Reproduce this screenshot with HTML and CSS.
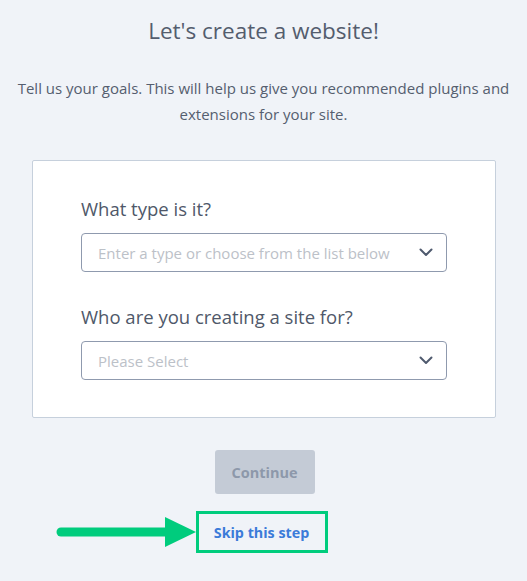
FILE: index.html
```html
<!DOCTYPE html>
<html lang="en">
<head>
<meta charset="utf-8">
<title>Let's create a website!</title>
<link rel="stylesheet" href="styles.css">
</head>
<body>
<main class="page">
  <h1 class="title">Let's create a website!</h1>
  <p class="intro">Tell us your goals. This will help us give you recommended plugins and extensions for your site.</p>
  <section class="card">
    <div class="field">
      <label class="label">What type is it?</label>
      <div class="select">
        <span class="placeholder">Enter a type or choose from the list below</span>
        <svg class="chevron" width="14" height="9" viewBox="0 0 14 9"><path d="M1.5 1.5 L7 7 L12.5 1.5" fill="none" stroke="#4f5a6e" stroke-width="2" stroke-linecap="round" stroke-linejoin="round"/></svg>
      </div>
    </div>
    <div class="field">
      <label class="label">Who are you creating a site for?</label>
      <div class="select">
        <span class="placeholder">Please Select</span>
        <svg class="chevron" width="14" height="9" viewBox="0 0 14 9"><path d="M1.5 1.5 L7 7 L12.5 1.5" fill="none" stroke="#4f5a6e" stroke-width="2" stroke-linecap="round" stroke-linejoin="round"/></svg>
      </div>
    </div>
  </section>
  <div class="actions">
    <button class="continue" disabled>Continue</button>
    <div class="skip-wrap">
      <svg class="arrow" width="140" height="32" viewBox="0 0 140 32"><line x1="5" y1="16" x2="112" y2="16" stroke="#00cc7d" stroke-width="9" stroke-linecap="round"/><polygon points="109,1 140,16 109,31" fill="#00cc7d"/></svg>
      <a class="skip" href="#">Skip this step</a>
    </div>
  </div>
</main>
</body>
</html>
```

FILE: styles.css
```css
html, body {
  margin: 0;
  padding: 0;
  background: #f0f3f8;
}
body {
  font-family: "Open Sans", "Liberation Sans", sans-serif;
  color: #545d6f;
}
.page {
  width: 527px;
  display: flex;
  flex-direction: column;
  align-items: center;
}
.title {
  margin: 16px 0 0;
  font-size: 22.5px;
  line-height: 30px;
  font-weight: 400;
  color: #545d6e;
  text-align: center;
}
.intro {
  margin: 29px 0 0;
  width: 520px;
  font-size: 15px;
  line-height: 26px;
  text-align: center;
  color: #555e6f;
}
.card {
  box-sizing: border-box;
  margin-top: 33px;
  margin-left: 1px;
  width: 464px;
  padding: 36px 48px 37px;
  background: #ffffff;
  border: 1px solid #c6d0dc;
  border-radius: 2px;
  display: flex;
  flex-direction: column;
  gap: 33px;
}
.field {
  display: flex;
  flex-direction: column;
  gap: 12px;
}
.label {
  font-size: 18.5px;
  line-height: 24px;
  color: #4f5869;
}
.select {
  box-sizing: border-box;
  height: 39px;
  border: 1px solid #8f9aae;
  border-radius: 4px;
  padding: 0 13px 0 16px;
  display: flex;
  align-items: center;
  justify-content: space-between;
}
.placeholder {
  font-size: 15px;
  color: #bcc1c8;
}
.chevron {
  display: block;
}
.actions {
  display: flex;
  flex-direction: column;
  align-items: center;
  margin-top: 32px;
}
.continue {
  width: 100px;
  height: 44px;
  border: none;
  border-radius: 3px;
  background: #c4cbd6;
  color: #8d98aa;
  font-family: inherit;
  font-size: 14.5px;
  font-weight: 700;
  margin-left: 2px;
}
.skip-wrap {
  position: relative;
  margin-top: 17px;
  margin-right: 4px;
}
.skip {
  box-sizing: border-box;
  display: flex;
  align-items: center;
  justify-content: center;
  width: 132px;
  height: 42px;
  border: 3px solid #00cc7d;
  color: #3b7bd9;
  font-size: 14.3px;
  font-weight: 700;
  text-decoration: none;
}
.arrow {
  position: absolute;
  left: -140px;
  top: 5px;
}
```
